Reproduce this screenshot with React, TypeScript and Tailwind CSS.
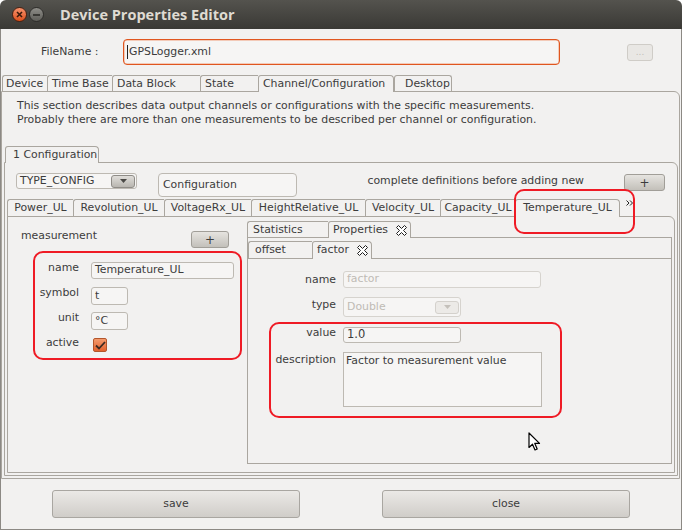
import React from "react";

type TabSpec = {
  label: string;
  width: string;
  pad?: string;
  active?: boolean;
  closable?: boolean;
};

const mainTabs: TabSpec[] = [
  { label: "Device", width: "w-[45px]", pad: "pl-[3px]" },
  { label: "Time Base", width: "w-[65px]", pad: "pl-[4px]" },
  { label: "Data Block", width: "w-[88px]", pad: "pl-[4px]" },
  { label: "State", width: "w-[58px]", pad: "pl-[4px]" },
  { label: "Channel/Configuration", width: "w-[136px]", pad: "pl-[4px]", active: true },
  { label: "Desktop", width: "w-[58px]", pad: "pl-[10px]" },
];

const measurementTabs: TabSpec[] = [
  { label: "Power_UL", width: "w-[66px]" },
  { label: "Revolution_UL", width: "w-[91px]" },
  { label: "VoltageRx_UL", width: "w-[87px]" },
  { label: "HeightRelative_UL", width: "w-[114px]" },
  { label: "Velocity_UL", width: "w-[75px]" },
  { label: "Capacity_UL", width: "w-[75px]" },
  { label: "Temperature_UL", width: "w-[105px]", active: true },
];

const propertyTabs: TabSpec[] = [
  { label: "Statistics", width: "w-[81px]", pad: "pl-[5px]" },
  { label: "Properties", width: "w-[83px]", pad: "pl-[4px]", active: true, closable: true },
];

const factorTabs: TabSpec[] = [
  { label: "offset", width: "w-[64px]", pad: "pl-[6px]" },
  { label: "factor", width: "w-[60px]", pad: "pl-[4px]", active: true, closable: true },
];

function CloseGlyph() {
  return (
    <svg width="11" height="11" viewBox="0 0 11 11" className="ml-auto mr-[6px] shrink-0">
      <polygon
        points="0.5,2.5 2.5,0.5 5.5,3.5 8.5,0.5 10.5,2.5 7.5,5.5 10.5,8.5 8.5,10.5 5.5,7.5 2.5,10.5 0.5,8.5 3.5,5.5"
        fill="#ffffff"
        stroke="#1e1e1e"
        strokeWidth="1"
      />
    </svg>
  );
}

function Tab({ tab, last }: { tab: TabSpec; last?: boolean }) {
  const classes = [
    "flex h-full shrink-0 items-center whitespace-nowrap border-t border-l border-[#aaa69f] rounded-tl-[3px]",
    tab.width,
    tab.pad ?? "justify-center",
    tab.active ? "relative z-10 border-r rounded-tr-[4px] bg-[#f2f1f0]" : "",
    last && !tab.active ? "border-r rounded-tr-[3px]" : "",
  ];
  return (
    <div className={classes.join(" ")}>
      <span className={tab.closable ? "mr-[8px]" : ""}>{tab.label}</span>
      {tab.closable && <CloseGlyph />}
    </div>
  );
}

function Field({ className, children }: { className: string; children?: React.ReactNode }) {
  return (
    <div
      className={`flex items-center rounded-[3px] border border-[#bdb9b2] bg-[#f6f5f4] pl-[3px] leading-none ${className}`}
    >
      {children}
    </div>
  );
}

function ComboArrow({ disabled }: { disabled?: boolean }) {
  return (
    <div
      className={`ml-auto mr-[1px] flex h-[13px] w-[24px] items-center justify-center rounded-[3px] border ${
        disabled
          ? "border-[#d4d1cc] bg-[#eceae7]"
          : "border-[#8f8c87] bg-gradient-to-b from-[#e0deda] to-[#b9b6b0]"
      }`}
    >
      <svg width="7" height="4" viewBox="0 0 7 4">
        <polygon points="0,0 7,0 3.5,4" fill={disabled ? "#c4c0ba" : "#4a4946"} />
      </svg>
    </div>
  );
}

function PlusButton({ className }: { className: string }) {
  return (
    <div
      className={`flex items-center justify-center rounded-[3px] border border-[#a19e98] bg-gradient-to-b from-[#e6e4e0] to-[#c3c0ba] text-[12px] leading-none text-[#3c3c3c] ${className}`}
    >
      +
    </div>
  );
}

function HighlightBox({ className }: { className: string }) {
  return (
    <div className={`pointer-events-none absolute z-30 rounded-[10px] border-2 border-[#ef1b25] ${className}`} />
  );
}

export default function App() {
  return (
    <div className="relative h-[530px] w-[682px] overflow-hidden bg-white font-['DejaVu_Sans',sans-serif] text-[10.9px] text-[#3c3c3c]">
      {/* title bar */}
      <div className="flex h-[29px] items-center rounded-t-[6px] bg-gradient-to-b from-[#54534e] to-[#3a3935]">
        <div className="ml-[12px] flex h-[15px] w-[15px] items-center justify-center rounded-full border border-[#4a2010] bg-gradient-to-b from-[#f7916a] to-[#dd4f17]">
          <svg width="7" height="7" viewBox="0 0 7 7">
            <path d="M1 1 L6 6 M6 1 L1 6" stroke="#3a1a0c" strokeWidth="1.6" />
          </svg>
        </div>
        <div className="ml-[2px] flex h-[15px] w-[15px] items-center justify-center rounded-full border border-[#2e2d2a] bg-gradient-to-b from-[#8e8d88] to-[#5f5e59]">
          <div className="h-[2px] w-[7px] bg-[#3a3935]" />
        </div>
        <span className="ml-[16px] font-['Open_Sans',sans-serif] text-[14.5px] font-bold text-[#dfdbd2]">
          Device Properties Editor
        </span>
      </div>

      {/* window body */}
      <div className="flex h-[501px] flex-col border-x border-b border-[#8c8984] bg-[#f2f1f0]">
        <div className="mt-[10px] flex h-[26px] items-center">
          <span className="ml-[40px] w-[82px] leading-none">FileName :</span>
          <div className="flex h-[26px] w-[437px] items-center rounded-[4px] border border-[#e0561f] bg-[#f6f5f4] pl-[3px] shadow-[inset_0_0_0_0.5px_#f0a07c]">
            <span className="mr-[1px] h-[14px] w-px bg-[#222]" />
            GPSLogger.xml
          </div>
          <div className="ml-[67px] flex h-[17px] w-[26px] items-center justify-center rounded-[3px] border border-[#cfccc7] bg-[#e9e7e4] text-[9px] leading-none text-[#c2beb8]">
            ...
          </div>
        </div>

        {/* main tabs */}
        <div className="relative z-10 mt-[10px] -mb-px flex h-[17px] pl-[1px]">
          {mainTabs.map((t, i) => (
            <Tab key={t.label} tab={t} last={i === mainTabs.length - 1} />
          ))}
        </div>
        <div className="mr-[1px] flex h-[388px] flex-col rounded-tr-[6px] border border-[#aaa69f]">
          <p className="pl-[15px] pt-[7px] leading-[13.5px]">
            This section describes data output channels or configurations with the specific measurements.
            <br />
            Probably there are more than one measurements to be described per channel or configuration.
          </p>

          {/* configuration tab */}
          <div className="relative z-10 mt-[20px] -mb-px flex h-[17px] pl-[3px]">
            <Tab tab={{ label: "1 Configuration", width: "w-[94px]", pad: "pl-[7px]", active: true }} />
          </div>
          <div className="ml-[2px] mr-[1px] flex h-[314px] flex-col rounded-tr-[6px] border border-[#aaa69f]">
            <div className="mt-[10px] flex h-[24px] items-start">
              <Field className="ml-[11px] h-[16px] w-[121px] rounded-[1px]">
                <span>TYPE_CONFIG</span>
                <ComboArrow />
              </Field>
              <Field className="ml-[21px] h-[24px] w-[139px] rounded-[4px]">
                <span className="pl-[1px]">Configuration</span>
              </Field>
              <span className="ml-auto mt-[1px] leading-[13px]">complete definitions before adding new</span>
              <PlusButton className="ml-[40px] mr-[12px] mt-[1px] h-[17px] w-[41px]" />
            </div>

            {/* measurement tabs */}
            <div className="relative z-10 ml-[2px] mt-[2px] -mb-px flex h-[18px]">
              {measurementTabs.map((t) => (
                <Tab key={t.label} tab={t} />
              ))}
              <svg width="9" height="7" viewBox="0 0 9 7" className="ml-[6px] mt-[1px]">
                <path d="M0.5 0.5 L3 3 L0.5 5.5 M4 0.5 L6.5 3 L4 5.5" stroke="#222" strokeWidth="1" fill="none" />
              </svg>
            </div>
            <div className="mx-[2px] flex h-[257px] rounded-tr-[6px] border border-[#aaa69f]">
              {/* measurement column */}
              <div className="flex w-[239px] shrink-0 flex-col">
                <div className="flex items-start pt-[12px]">
                  <span className="ml-[13px] leading-[13px]">measurement</span>
                  <PlusButton className="ml-auto mr-[18px] mt-[2px] h-[17px] w-[38px]" />
                </div>
                <div className="mt-[14px] flex flex-col gap-[7px]">
                  <div className="flex h-[18px] items-start">
                    <span className="w-[71px] text-right leading-[12px]">name</span>
                    <Field className="ml-[12px] h-[17px] w-[143px]">Temperature_UL</Field>
                  </div>
                  <div className="flex h-[18px] items-start">
                    <span className="w-[71px] text-right leading-[12px]">symbol</span>
                    <Field className="ml-[12px] h-[18px] w-[37px]">t</Field>
                  </div>
                  <div className="flex h-[18px] items-start">
                    <span className="w-[71px] text-right leading-[12px]">unit</span>
                    <Field className="ml-[12px] h-[18px] w-[37px]">°C</Field>
                  </div>
                  <div className="flex h-[18px] items-start">
                    <span className="w-[71px] text-right leading-[12px]">active</span>
                    <div className="ml-[14px] mt-[1px] flex h-[14px] w-[14px] items-center justify-center rounded-[2px] border border-[#b4552a] bg-gradient-to-b from-[#f39a6c] to-[#e2612b]">
                      <svg width="11" height="9" viewBox="0 0 11 9">
                        <path d="M1 4.5 L4 7.5 L10 1" stroke="#3b2a22" strokeWidth="1.8" fill="none" />
                      </svg>
                    </div>
                  </div>
                </div>
              </div>

              {/* properties panel */}
              <div className="mt-[4px] flex w-[425px] shrink-0 flex-col">
                <div className="relative z-10 -mb-px flex h-[17px]">
                  {propertyTabs.map((t) => (
                    <Tab key={t.label} tab={t} />
                  ))}
                </div>
                <div className="flex h-[227px] flex-col border border-[#aaa69f]">
                  <div className="mt-[3px] border-b border-[#aaa69f]">
                    <div className="relative z-10 -mb-px flex h-[18px]">
                      {factorTabs.map((t) => (
                        <Tab key={t.label} tab={t} />
                      ))}
                    </div>
                  </div>

                  <div className="mt-[12px] flex items-start">
                    <span className="mt-[2px] w-[88px] text-right leading-[13px]">name</span>
                    <Field className="ml-[7px] h-[17px] w-[198px] border-[#d6d3ce] bg-[#ebe9e6] text-[#bfbbb5]">
                      factor
                    </Field>
                  </div>
                  <div className="mt-[9px] flex items-start">
                    <span className="mt-[1px] w-[88px] text-right leading-[13px]">type</span>
                    <Field className="ml-[7px] h-[20px] w-[118px] border-[#d6d3ce] bg-[#ebe9e6] text-[#bfbbb5]">
                      <span>Double</span>
                      <ComboArrow disabled />
                    </Field>
                  </div>
                  <div className="mt-[10px] flex items-start">
                    <span className="-mt-[1px] w-[88px] text-right leading-[13px]">value</span>
                    <Field className="ml-[7px] h-[16px] w-[118px] text-[11.5px]">1.0</Field>
                  </div>
                  <div className="mt-[9px] flex items-start">
                    <span className="mt-[1px] w-[88px] text-right leading-[13px]">description</span>
                    <div className="ml-[7px] h-[55px] w-[199px] border border-[#bdb9b2] bg-[#f6f5f4] pl-[2px] pt-[1px] leading-[13px]">
                      Factor to measurement value
                    </div>
                  </div>
                </div>
              </div>
            </div>
          </div>
        </div>

        {/* buttons */}
        <div className="flex h-[50px] items-start pt-[11px]">
          <div className="ml-[51px] flex h-[28px] w-[248px] items-center justify-center rounded-[3px] border border-[#a9a6a1] bg-gradient-to-b from-[#ebe9e6] to-[#d0cdc9]">
            save
          </div>
          <div className="ml-[82px] flex h-[28px] w-[248px] items-center justify-center rounded-[3px] border border-[#a9a6a1] bg-gradient-to-b from-[#ebe9e6] to-[#d0cdc9]">
            close
          </div>
        </div>
      </div>

      {/* annotation overlays */}
      <HighlightBox className="left-[514px] top-[189px] h-[45px] w-[121px]" />
      <HighlightBox className="left-[33px] top-[251px] h-[109px] w-[209px]" />
      <HighlightBox className="left-[269px] top-[322px] h-[96px] w-[293px]" />

      {/* mouse pointer */}
      <svg width="14" height="20" viewBox="0 0 14 20" className="absolute left-[528px] top-[432px] z-40">
        <path
          d="M1 1 L1 15.5 L4.5 12.2 L7 18 L9.2 17 L6.8 11.4 L11.5 11.4 Z"
          fill="#ffffff"
          stroke="#000000"
          strokeWidth="1.2"
          strokeLinejoin="round"
        />
      </svg>
    </div>
  );
}
